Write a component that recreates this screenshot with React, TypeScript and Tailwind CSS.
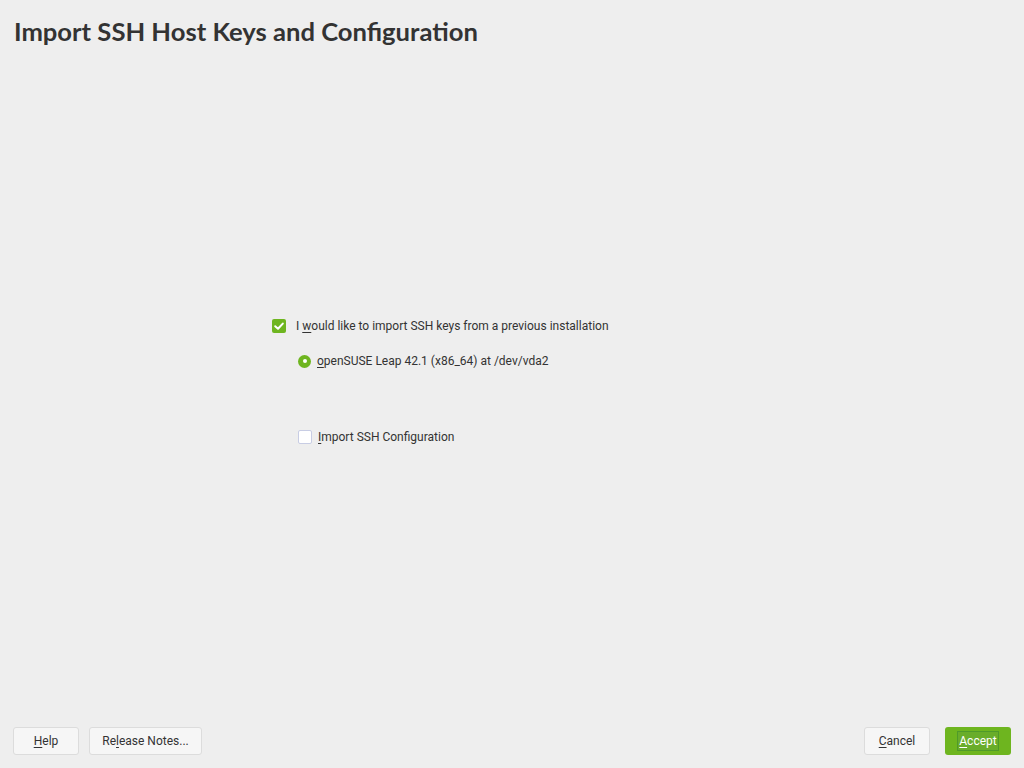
import React, { useState } from 'react';

function CheckIcon() {
  return (
    <svg viewBox="0 0 14 14" className="w-[14px] h-[14px]">
      <path d="M3.2 7.2 L6 9.8 L10.8 4.6" fill="none" stroke="#fff" strokeWidth="2" strokeLinecap="round" strokeLinejoin="round" />
    </svg>
  );
}

function Btn({ u, rest, pre = '', primary = false, w }: { u: string; rest: string; pre?: string; primary?: boolean; w: string }) {
  return (
    <button
      className={
        primary
          ? `h-[28px] ${w} rounded-[3px] bg-[#6eb51f] text-white text-[12px] flex items-center justify-center`
          : `h-[28px] ${w} rounded-[3px] bg-[#f6f6f6] border border-[#dcdcdc] text-[#333] text-[12px] flex items-center justify-center`
      }
    >
      <span className={primary ? 'border border-[#4f9a2a] bg-[#69ad2a] px-[1px] leading-[18px]' : ''}>
        {pre}
        <span className="underline underline-offset-2">{u}</span>
        {rest}
      </span>
    </button>
  );
}

export default function App() {
  const [importKeys, setImportKeys] = useState(true);
  const [importConfig, setImportConfig] = useState(false);

  return (
    <div className="w-[1024px] h-[768px] bg-[#eeeeee] flex flex-col text-[#333]" style={{ fontFamily: 'Roboto, sans-serif' }}>
      <h1 className="pl-[14px] pt-[15px] text-[25.6px] font-bold leading-[32px] text-[#333]" style={{ fontFamily: 'Lato, sans-serif' }}>
        Import SSH Host Keys and Configuration
      </h1>

      <div className="flex-1 pl-[272px] pt-[271px]">
        <label className="flex items-center gap-[10px] h-[16px] text-[12px]" onClick={() => setImportKeys(!importKeys)}>
          <span className={importKeys ? 'w-[14px] h-[14px] rounded-[2px] bg-[#6eb51f] flex items-center justify-center' : 'w-[14px] h-[14px] rounded-[2px] bg-white border border-[#c8cde4]'}>
            {importKeys && <CheckIcon />}
          </span>
          <span>
            I <span className="underline underline-offset-2">w</span>ould like to import SSH keys from a previous installation
          </span>
        </label>

        <div className="pl-[26px] mt-[19px] flex items-center gap-[6px] h-[16px] text-[12px]">
          <span className="w-[13px] h-[13px] rounded-full bg-[#6eb51f] flex items-center justify-center">
            <span className="w-[4px] h-[4px] rounded-full bg-white" />
          </span>
          <span>
            <span className="underline underline-offset-2">o</span>penSUSE Leap 42.1 (x86_64) at /dev/vda2
          </span>
        </div>

        <label className="pl-[26px] mt-[60px] flex items-center gap-[6px] h-[16px] text-[12px]" onClick={() => setImportConfig(!importConfig)}>
          <span className={importConfig ? 'w-[14px] h-[14px] rounded-[2px] bg-[#6eb51f] flex items-center justify-center' : 'w-[14px] h-[14px] rounded-[2px] bg-white border border-[#c8cde4]'}>
            {importConfig && <CheckIcon />}
          </span>
          <span>
            <span className="underline underline-offset-2">I</span>mport SSH Configuration
          </span>
        </label>
      </div>

      <div className="flex items-center px-[13px] pb-[13px]">
        <Btn u="H" rest="elp" w="w-[66px]" />
        <div className="w-[10px]" />
        <Btn pre="Re" u="l" rest="ease Notes..." w="w-[113px]" />
        <div className="flex-1" />
        <Btn u="C" rest="ancel" w="w-[66px]" />
        <div className="w-[15px]" />
        <Btn u="A" rest="ccept" w="w-[66px]" primary />
      </div>
    </div>
  );
}
